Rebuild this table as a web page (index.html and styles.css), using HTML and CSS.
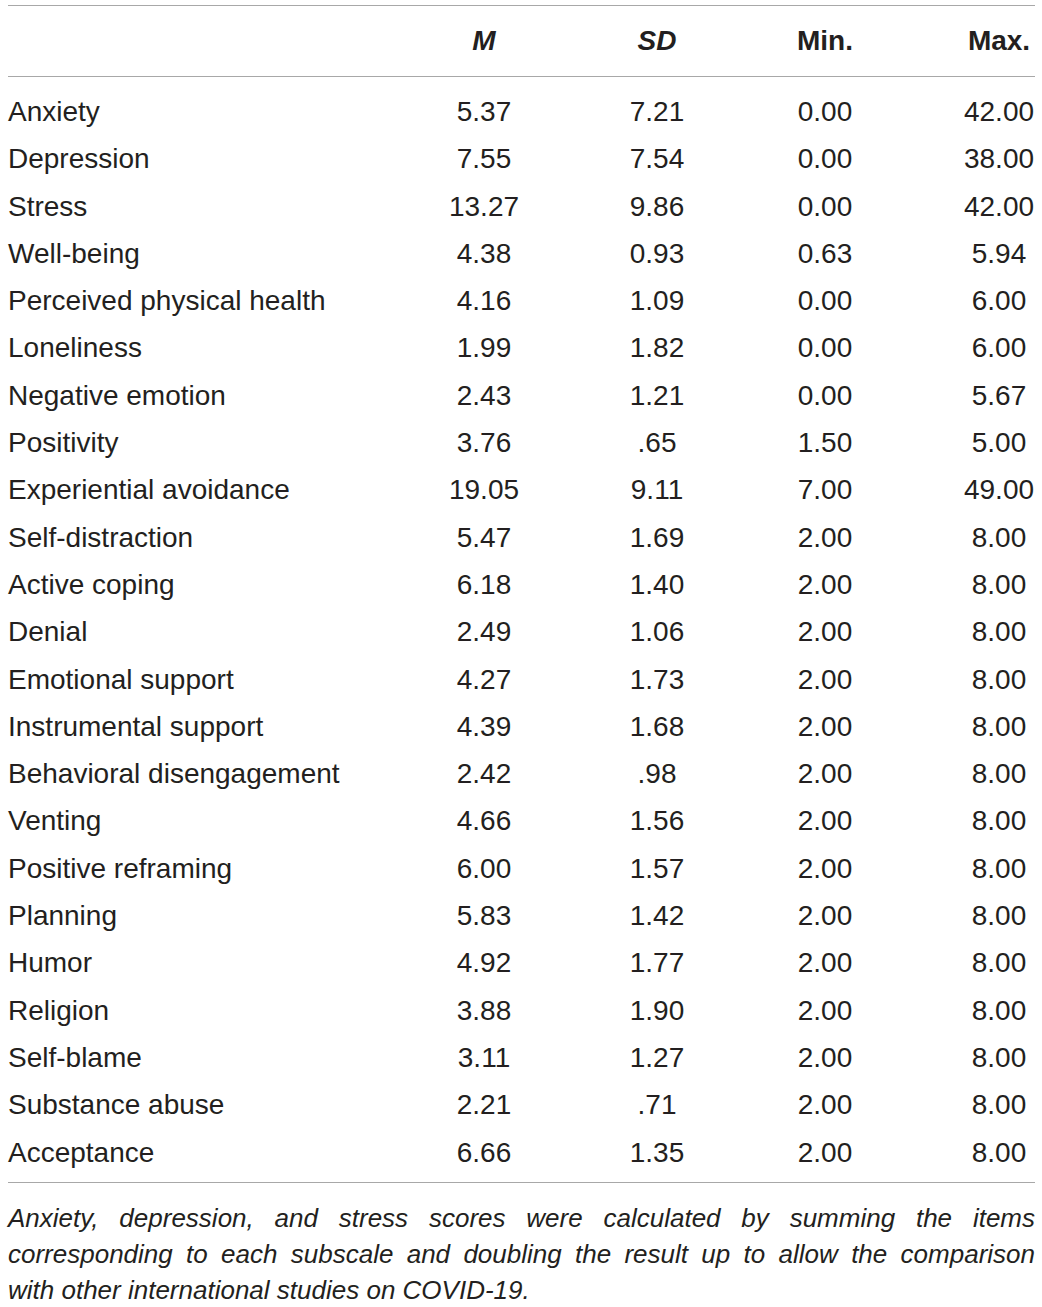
FILE: index.html
```html
<!DOCTYPE html>
<html>
<head>
<meta charset="utf-8">
<link rel="stylesheet" href="styles.css">
</head>
<body>
<div class="wrap">
  <div class="table">
    <div class="row head">
      <div class="c1"></div>
      <div class="c num"><i>M</i></div>
      <div class="c num"><i>SD</i></div>
      <div class="c num">Min.</div>
      <div class="c num">Max.</div>
    </div>
    <div class="body">
      <div class="row"><div class="c1">Anxiety</div><div class="num">5.37</div><div class="num">7.21</div><div class="num">0.00</div><div class="num">42.00</div></div>
      <div class="row"><div class="c1">Depression</div><div class="num">7.55</div><div class="num">7.54</div><div class="num">0.00</div><div class="num">38.00</div></div>
      <div class="row"><div class="c1">Stress</div><div class="num">13.27</div><div class="num">9.86</div><div class="num">0.00</div><div class="num">42.00</div></div>
      <div class="row"><div class="c1">Well-being</div><div class="num">4.38</div><div class="num">0.93</div><div class="num">0.63</div><div class="num">5.94</div></div>
      <div class="row"><div class="c1">Perceived physical health</div><div class="num">4.16</div><div class="num">1.09</div><div class="num">0.00</div><div class="num">6.00</div></div>
      <div class="row"><div class="c1">Loneliness</div><div class="num">1.99</div><div class="num">1.82</div><div class="num">0.00</div><div class="num">6.00</div></div>
      <div class="row"><div class="c1">Negative emotion</div><div class="num">2.43</div><div class="num">1.21</div><div class="num">0.00</div><div class="num">5.67</div></div>
      <div class="row"><div class="c1">Positivity</div><div class="num">3.76</div><div class="num">.65</div><div class="num">1.50</div><div class="num">5.00</div></div>
      <div class="row"><div class="c1">Experiential avoidance</div><div class="num">19.05</div><div class="num">9.11</div><div class="num">7.00</div><div class="num">49.00</div></div>
      <div class="row"><div class="c1">Self-distraction</div><div class="num">5.47</div><div class="num">1.69</div><div class="num">2.00</div><div class="num">8.00</div></div>
      <div class="row"><div class="c1">Active coping</div><div class="num">6.18</div><div class="num">1.40</div><div class="num">2.00</div><div class="num">8.00</div></div>
      <div class="row"><div class="c1">Denial</div><div class="num">2.49</div><div class="num">1.06</div><div class="num">2.00</div><div class="num">8.00</div></div>
      <div class="row"><div class="c1">Emotional support</div><div class="num">4.27</div><div class="num">1.73</div><div class="num">2.00</div><div class="num">8.00</div></div>
      <div class="row"><div class="c1">Instrumental support</div><div class="num">4.39</div><div class="num">1.68</div><div class="num">2.00</div><div class="num">8.00</div></div>
      <div class="row"><div class="c1">Behavioral disengagement</div><div class="num">2.42</div><div class="num">.98</div><div class="num">2.00</div><div class="num">8.00</div></div>
      <div class="row"><div class="c1">Venting</div><div class="num">4.66</div><div class="num">1.56</div><div class="num">2.00</div><div class="num">8.00</div></div>
      <div class="row"><div class="c1">Positive reframing</div><div class="num">6.00</div><div class="num">1.57</div><div class="num">2.00</div><div class="num">8.00</div></div>
      <div class="row"><div class="c1">Planning</div><div class="num">5.83</div><div class="num">1.42</div><div class="num">2.00</div><div class="num">8.00</div></div>
      <div class="row"><div class="c1">Humor</div><div class="num">4.92</div><div class="num">1.77</div><div class="num">2.00</div><div class="num">8.00</div></div>
      <div class="row"><div class="c1">Religion</div><div class="num">3.88</div><div class="num">1.90</div><div class="num">2.00</div><div class="num">8.00</div></div>
      <div class="row"><div class="c1">Self-blame</div><div class="num">3.11</div><div class="num">1.27</div><div class="num">2.00</div><div class="num">8.00</div></div>
      <div class="row"><div class="c1">Substance abuse</div><div class="num">2.21</div><div class="num">.71</div><div class="num">2.00</div><div class="num">8.00</div></div>
      <div class="row"><div class="c1">Acceptance</div><div class="num">6.66</div><div class="num">1.35</div><div class="num">2.00</div><div class="num">8.00</div></div>
    </div>
  </div>
  <p class="note">
    <span class="line just">Anxiety, depression, and stress scores were calculated by summing the items</span>
    <span class="line just">corresponding to each subscale and doubling the result up to allow the comparison</span>
    <span class="line">with other international studies on COVID-19.</span>
  </p>
</div>
</body>
</html>
```
FILE: styles.css
```css
html, body {
  margin: 0;
  padding: 0;
  background: #ffffff;
}

.wrap {
  width: 1027px;
  margin-left: 8px;
  padding-top: 5px;
  font-family: "Liberation Sans", Arial, sans-serif;
  color: #231f20;
}

.table {
  border-top: 1.5px solid #a8a8a8;
  border-bottom: 1.5px solid #a8a8a8;
}

.row {
  display: grid;
  grid-template-columns: 333px 286px 60px 276px 72px;
  font-size: 28px;
  line-height: 47.3px;
}

.head {
  height: 70px;
  align-items: center;
  font-weight: bold;
  border-bottom: 1.5px solid #a8a8a8;
}

.body {
  padding-top: 11px;
  padding-bottom: 6px;
}

.c1 {
  white-space: nowrap;
}

.num {
  justify-self: center;
  white-space: nowrap;
}

.note {
  margin: 17px 0 0 0;
  font-style: italic;
  font-size: 26px;
  line-height: 36px;
}

.line {
  display: block;
  white-space: nowrap;
}

.just {
  white-space: normal;
  text-align: justify;
  text-align-last: justify;
}
```
